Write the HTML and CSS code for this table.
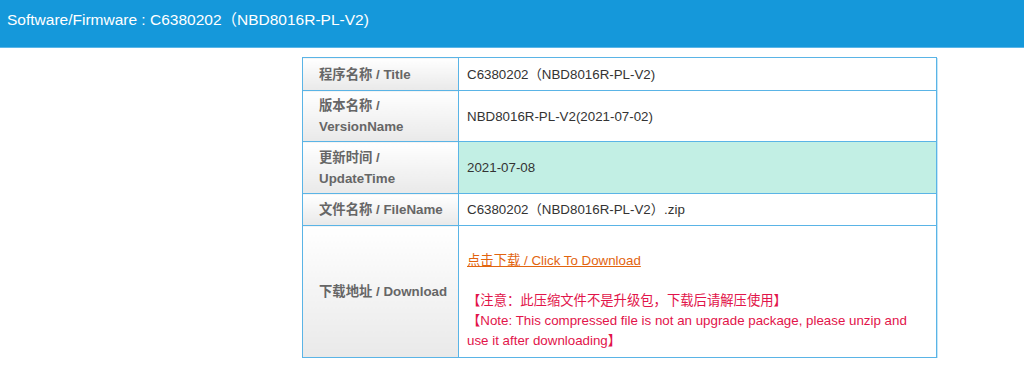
FILE: index.html
```html
<!DOCTYPE html>
<html lang="zh-CN">
<head>
<meta charset="utf-8">
<title>Software/Firmware</title>
<link rel="stylesheet" href="styles.css">
</head>
<body>
<header class="topbar">
  <h1 class="topbar-title">Software/Firmware : C6380202（NBD8016R-PL-V2)</h1>
</header>
<main class="content">
  <table class="info">
    <tr class="r1">
      <th class="label">程序名称 / Title</th>
      <td class="value">C6380202（NBD8016R-PL-V2)</td>
    </tr>
    <tr class="r2">
      <th class="label">版本名称 /<br>VersionName</th>
      <td class="value">NBD8016R-PL-V2(2021-07-02)</td>
    </tr>
    <tr class="r3">
      <th class="label">更新时间 /<br>UpdateTime</th>
      <td class="value value-hl">2021-07-08</td>
    </tr>
    <tr class="r4">
      <th class="label">文件名称 / FileName</th>
      <td class="value">C6380202（NBD8016R-PL-V2）.zip</td>
    </tr>
    <tr class="r5">
      <th class="label">下载地址 / Download</th>
      <td class="value value-dl">
        <br>
        <a class="dl-link" href="#">点击下载 / Click To Download</a><br>
        <br>
        <span class="note">【注意：此压缩文件不是升级包，下载后请解压使用】<br>【Note: This compressed file is not an upgrade package, please unzip and use it after downloading】</span>
      </td>
    </tr>
  </table>
</main>
</body>
</html>
```

FILE: styles.css
```css
html, body {
  margin: 0;
  padding: 0;
  background: #ffffff;
}
body {
  font-family: "Liberation Sans", Arial, "Noto Sans CJK SC", sans-serif;
  color: #333333;
}
.topbar {
  background: #1598da;
  height: 47px;
  border-bottom: 1px solid #5bb6e8;
  display: flex;
  align-items: flex-start;
}
.topbar-title {
  margin: 0;
  padding: 9px 0 0 7px;
  font-size: 15.5px;
  font-weight: normal;
  line-height: 22px;
  color: #ffffff;
}
.content {
  padding: 9px 0 0 302px;
}
.info {
  border-collapse: collapse;
  width: 635px;
  border: 1px solid #7cc4ec;
  box-shadow: 1px 1px 0 #c4e6f8;
  table-layout: fixed;
}
.info th, .info td {
  border: 1px solid #5ab4e6;
  font-size: 13.33px;
  line-height: 21px;
  text-align: left;
  vertical-align: middle;
  padding: 4px 8px;
}
.r1 th, .r1 td { height: 24px; }
.r2 th, .r2 td { height: 42px; }
.r3 th, .r3 td { height: 43px; }
.r4 th, .r4 td { height: 23px; }
.r5 th, .r5 td { height: 120px; }
.label {
  width: 131px;
  padding-left: 16px !important;
  font-weight: bold;
  color: #666666;
  background: linear-gradient(#ffffff, #e9e9e9);
}
.value {
  color: #333333;
  background: #ffffff;
}
.value-hl {
  background: #c2efe4;
}
.value-dl {
  line-height: 20px !important;
  padding-top: 5px !important;
  padding-bottom: 6px !important;
}
.dl-link {
  color: #e2640f;
  text-decoration: underline;
}
.note {
  color: #e2144a;
}
```
